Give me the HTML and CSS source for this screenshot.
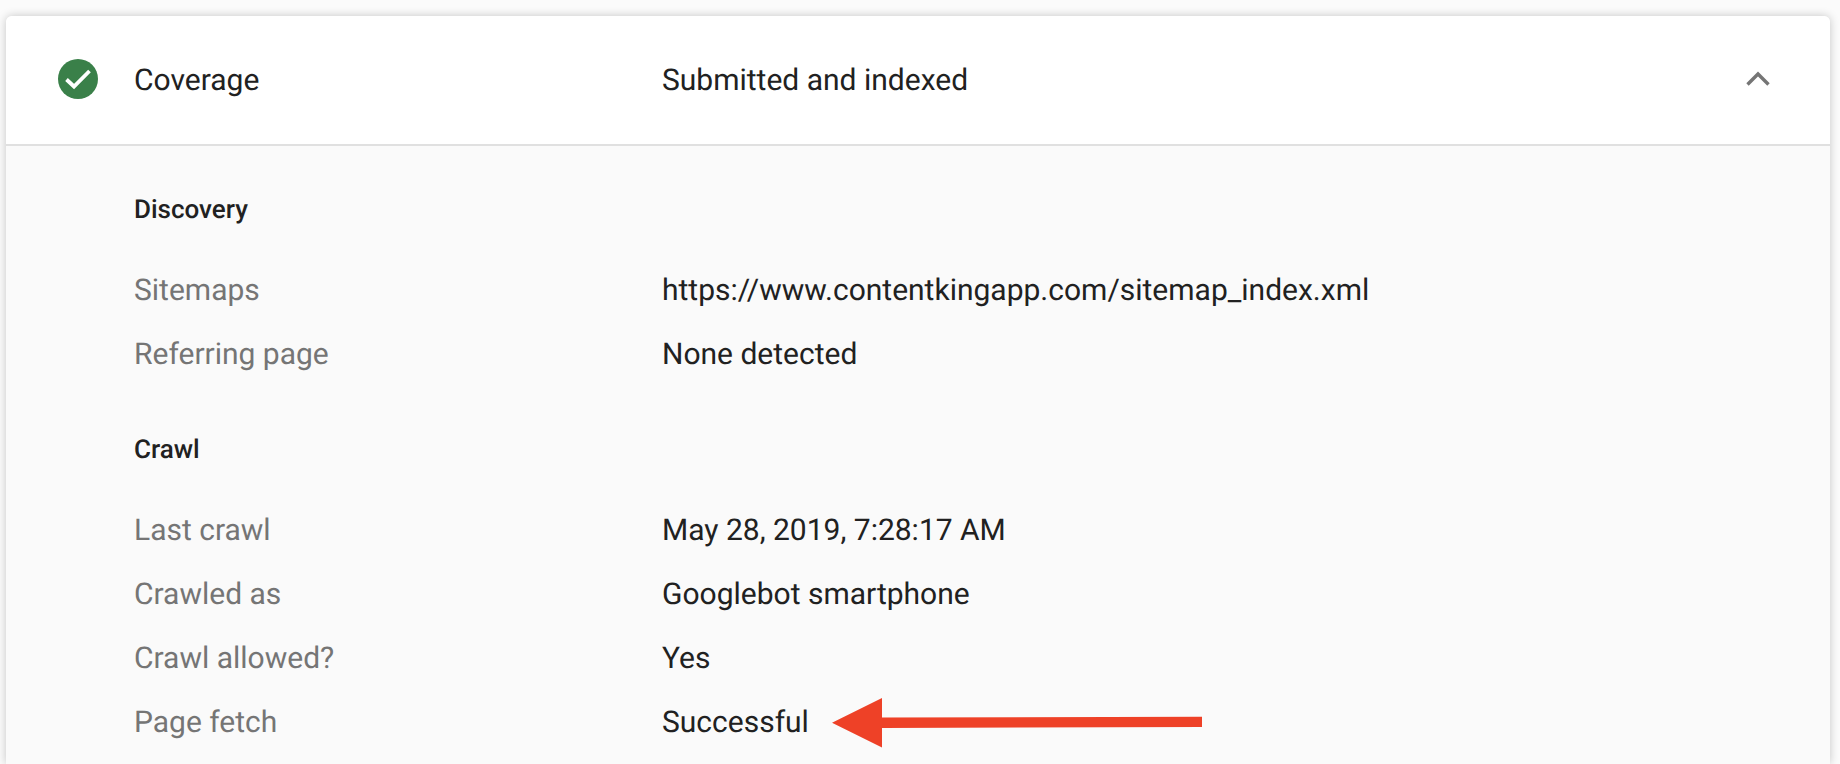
FILE: index.html
```html
<!DOCTYPE html>
<html lang="en">
<head>
<meta charset="utf-8">
<title>Coverage</title>
<link rel="stylesheet" href="styles.css">
</head>
<body>
<main class="card">
  <header class="head">
    <svg class="status" viewBox="0 0 40 40" aria-hidden="true">
      <circle cx="20" cy="20" r="20" fill="#3a8049"/>
      <path d="M8.5 20.5 L16 27.5 L31.5 12" fill="none" stroke="#fff" stroke-width="3.8"/>
    </svg>
    <div class="head-label">Coverage</div>
    <div class="head-value">Submitted and indexed</div>
    <svg class="chevron" viewBox="0 0 24 16" aria-hidden="true">
      <path d="M1.5 13.5 L12 3 L22.5 13.5" fill="none" stroke="#757575" stroke-width="3.4"/>
    </svg>
  </header>
  <section class="body">
    <h2 class="group first">Discovery</h2>
    <div class="row"><div class="label">Sitemaps</div><div class="value">https://www.contentkingapp.com/sitemap_index.xml</div></div>
    <div class="row"><div class="label">Referring page</div><div class="value">None detected</div></div>
    <h2 class="group">Crawl</h2>
    <div class="row"><div class="label">Last crawl</div><div class="value">May 28, 2019, 7:28:17 AM</div></div>
    <div class="row"><div class="label">Crawled as</div><div class="value">Googlebot smartphone</div></div>
    <div class="row"><div class="label">Crawl allowed?</div><div class="value">Yes</div></div>
    <div class="row"><div class="label">Page fetch</div><div class="value">Successful</div></div>
  </section>
  <svg class="arrow" viewBox="0 0 370 50" aria-hidden="true">
    <path d="M0 24.7 L50 0 L50 19.5 L370 18.7 L370 29 L50 30 L50 49.5 Z" fill="#ee4127"/>
  </svg>
</main>
</body>
</html>
```
FILE: styles.css
```css
* { box-sizing: border-box; }
html, body { margin: 0; height: 764px; overflow: hidden; }
body {
  background: #fbfbfb;
  padding: 16px 10px 0 6px;
  font-family: Roboto, "Liberation Sans", sans-serif;
  color: #212121;
  text-rendering: geometricPrecision;
  -webkit-font-smoothing: antialiased;
}
.card {
  position: relative;
  height: 748px;
  background: #fafafa;
  border-radius: 6px 6px 0 0;
  box-shadow: 0 0 10px rgba(0,0,0,.22);
  overflow: hidden;
}
.head {
  display: flex;
  align-items: center;
  height: 130px;
  padding: 0 0 2px 52px;
  background: #fff;
  border-bottom: 2px solid #e0e0e0;
}
.status { width: 40px; height: 40px; flex: none; margin-right: 36px; }
.head-label { width: 528px; padding-top: 2px; font-size: 30px; }
.head-value { flex: 1; padding-top: 2px; font-size: 30px; }
.chevron { width: 24px; height: 16px; margin-right: 60px; }
.body { padding: 0 0 0 128px; }
.group { margin: 31px 0 17px; height: 64px; line-height: 64px; font-size: 26px; font-weight: 500; color: #212121; }
.group.first { margin-top: 32px; }
.row { display: flex; height: 64px; line-height: 64px; font-size: 30px; }
.label { width: 528px; color: #757575; }
.value { color: #212121; }
.arrow { position: absolute; left: 826px; top: 682px; width: 370px; height: 50px; }
```
